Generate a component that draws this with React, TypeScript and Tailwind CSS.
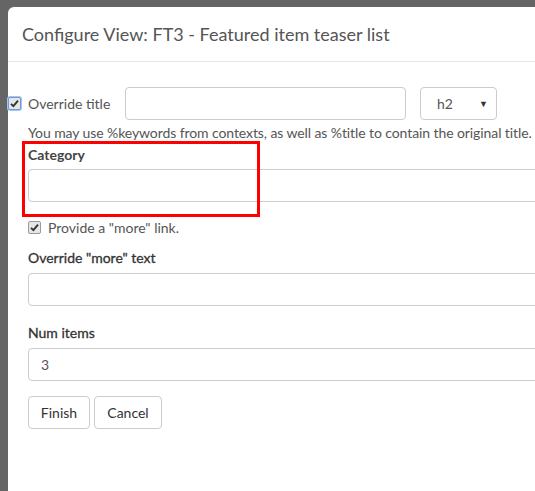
import React from "react";

function Check({ focused }: { focused?: boolean }) {
  return (
    <span
      className={
        "flex h-[13px] w-[13px] shrink-0 items-center justify-center rounded-[2px] border bg-[#e6e6e6] " +
        (focused ? "border-[#6f9ad8] shadow-[0_0_0_1px_#a9c5ee]" : "border-[#9a9a9a]")
      }
    >
      <svg width="9" height="9" viewBox="0 0 9 9">
        <path d="M1 4.8 L3.4 7.2 L8 1.6" fill="none" stroke="#333" strokeWidth="1.9" />
      </svg>
    </span>
  );
}

function TextInput({ value }: { value?: string }) {
  return (
    <div className="flex h-[33px] w-[560px] items-center rounded-[4px] border border-[#cccccc] bg-white px-[12px] text-[14px] text-[#555]">
      {value}
    </div>
  );
}

export default function App() {
  return (
    <div
      className="h-[491px] w-[535px] overflow-hidden bg-[#656565] pl-[8px] pt-[7px] text-[#555]"
      style={{ fontFamily: "Lato, 'Open Sans', sans-serif" }}
    >
      <div className="h-[500px] w-[600px] rounded-tl-[6px] bg-white">
        <div className="flex h-[55px] items-center border-b border-[#e5e5e5] px-[14px] text-[18px] text-[#555]">
          Configure View: FT3 - Featured item teaser list
        </div>

        <div className="relative pt-[25px]">
          <div className="pointer-events-none absolute left-[14px] top-[79px] h-[76px] w-[238px] border-[3px] border-[#ff0000]" />

          <div className="flex items-center">
            <Check focused />
            <span className="ml-[7px] w-[97px] text-[14px]">Override title</span>
            <div className="h-[33px] w-[281px] rounded-[4px] border border-[#cccccc]" />
            <div className="ml-[14px] flex h-[33px] w-[77px] items-center justify-between rounded-[4px] border border-[#cccccc] pl-[16px] pr-[8px] text-[14px]">
              <span>h2</span>
              <span className="text-[9px] text-[#333]">▼</span>
            </div>
          </div>

          <div className="pl-[20px]">
            <p className="mt-[3px] whitespace-nowrap text-[14px] leading-[20px] tracking-[-0.09px]">
              You may use %keywords from contexts, as well as %title to contain the original title.
            </p>

            <div className="mt-[2px] text-[14px] font-bold leading-[20px] text-[#444]">Category</div>
            <div className="mt-[4px]">
              <TextInput />
            </div>

            <label className="mt-[15px] flex h-[20px] items-center gap-[7px] text-[14px]">
              <Check />
              Provide a "more" link.
            </label>

            <div className="mt-[11px] text-[14px] leading-[20px] text-[#333] [-webkit-text-stroke:0.3px_#333]">
              Override "more" text
            </div>
            <div className="mt-[5px]">
              <TextInput />
            </div>

            <div className="mt-[17px] text-[14px] leading-[20px] text-[#333] [-webkit-text-stroke:0.3px_#333]">
              Num items
            </div>
            <div className="mt-[5px]">
              <TextInput value="3" />
            </div>

            <div className="mt-[15px] flex gap-[4px]">
              <button className="h-[33px] w-[62px] rounded-[4px] border border-[#cccccc] bg-white text-[14px] text-[#333]">
                Finish
              </button>
              <button className="h-[33px] w-[68px] rounded-[4px] border border-[#cccccc] bg-white text-[14px] text-[#333]">
                Cancel
              </button>
            </div>
          </div>
        </div>
      </div>
    </div>
  );
}
